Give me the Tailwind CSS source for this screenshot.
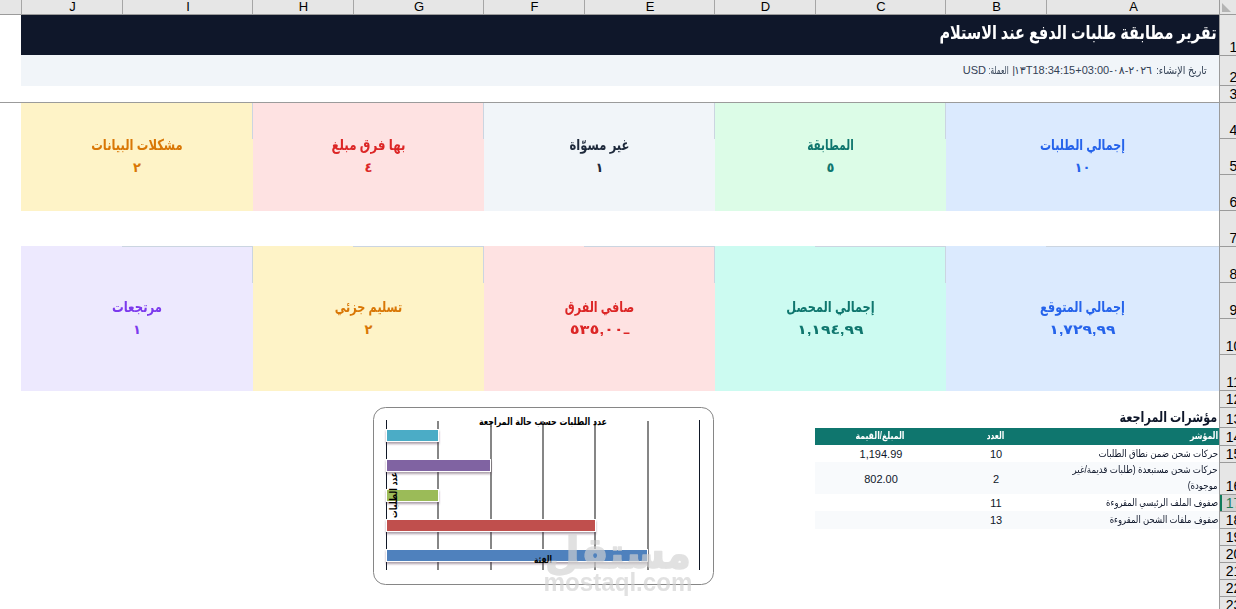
<!DOCTYPE html>
<html lang="ar" dir="rtl">
<head>
    <meta charset="UTF-8">
    <meta name="viewport" content="width=device-width, initial-scale=1.0">
    <title>تقرير مطابقة طلبات الدفع عند الاستلام</title>
    <script src="https://cdn.jsdelivr.net/npm/@tailwindcss/browser@4"></script>
</head>
<body class="relative w-[1236px] h-[609px] overflow-hidden bg-white text-black font-['Liberation_Sans','DejaVu_Sans',sans-serif]">
    <!-- Column letters -->
    <div class="flex h-[15px] bg-[#e6e6e6] border-b border-[#9b9b9b] text-[13px] leading-[13px] text-center *:pl-px">
        <div class="w-[17px] border-l border-[#9b9b9b] pt-[3px] pr-[5px]">
            <svg class="block" width="9" height="9"><path d="M0 0V9H9Z" fill="#b4b4b4"/></svg>
        </div>
        <div class="w-[173px] border-l border-[#a6a6a6]">A</div>
        <div class="w-[101px] border-l border-[#a6a6a6]">B</div>
        <div class="w-[130px] border-l border-[#a6a6a6]">C</div>
        <div class="w-[101px] border-l border-[#a6a6a6]">D</div>
        <div class="w-[130px] border-l border-[#a6a6a6]">E</div>
        <div class="w-[101px] border-l border-[#a6a6a6]">F</div>
        <div class="w-[130px] border-l border-[#a6a6a6]">G</div>
        <div class="w-[101px] border-l border-[#a6a6a6]">H</div>
        <div class="w-[130px] border-l border-[#a6a6a6]">I</div>
        <div class="w-[101px] border-l border-[#a6a6a6]">J</div>
    </div>

    <div class="flex h-[594px]">
        <!-- Row numbers -->
        <div dir="ltr" class="w-[17px] shrink-0 overflow-hidden border-l border-[#9b9b9b] bg-[#e6e6e6] text-[14px] leading-[14px]">
            <div class="w-[27px] text-center *:flex *:items-end *:justify-center *:border-b *:border-[#9b9b9b] *:pb-px">
                <div class="h-[41px]">1</div>
                <div class="h-[30px]">2</div>
                <div class="h-[17px]">3</div>
                <div class="h-[36px]">4</div>
                <div class="h-[36px]">5</div>
                <div class="h-[36px]">6</div>
                <div class="h-[36px]">7</div>
                <div class="h-[36px]">8</div>
                <div class="h-[36px]">9</div>
                <div class="h-[36px]">10</div>
                <div class="h-[36px]">11</div>
                <div class="h-[17px]">12</div>
                <div class="h-[20px]">13</div>
                <div class="h-[18px]">14</div>
                <div class="h-[17px]">15</div>
                <div class="h-[32px]">16</div>
                <div class="h-[17px] bg-[#d2d2d2] text-[#217a5b] shadow-[inset_2px_0_0_#107c5c]">17</div>
                <div class="h-[17px]">18</div>
                <div class="h-[17px]">19</div>
                <div class="h-[17px]">20</div>
                <div class="h-[17px]">21</div>
                <div class="h-[17px]">22</div>
                <div class="h-[17px]">23</div>
            </div>
        </div>

        <!-- Sheet -->
        <div class="w-[1219px] shrink-0">
            <div class="border-b border-[#9b9b9b] h-[88px]">
                <h1 class="w-[1198px] h-[40px] bg-[#0f172a] text-white font-bold text-[19px] leading-[36px] pr-[2px]"><span class="inline-block origin-right scale-x-[.76]">تقرير مطابقة طلبات الدفع عند الاستلام</span></h1>
                <div class="flex w-[1198px] h-[31px] bg-[#f1f5f9] text-[#334155] text-[11px] leading-[30px] pr-[12px] whitespace-nowrap">
                    <span class="w-[55px]"><span class="inline-block origin-right scale-x-[.86]">تاريخ الإنشاء:</span></span>
                    <span class="w-[137px]">٢٠٢٦-٠٨-١٣T18:34:15+03:00</span>
                    <span class="w-[6px]">|</span>
                    <span class="w-[23px]"><span class="inline-block origin-right scale-x-[.66]">العملة:</span></span>
                    <span>USD</span>
                </div>
            </div>

            <!-- Order counts -->
            <div class="flex h-[108px] font-bold text-[15px] leading-[23px] text-center *:pt-[30px]">
                <div class="w-[273px] bg-[#dbeafe] text-[#2563eb]"><p class="scale-x-[.74]">إجمالي الطلبات</p><p class="text-[13px]">١٠</p></div>
                <div class="relative w-[231px] bg-[#dcfce7] text-[#0f766e]"><i class="absolute top-0 right-0 w-px h-[36px] bg-[#cbd5e1]"></i><p class="scale-x-[.7]">المطابقة</p><p class="text-[13px]">٥</p></div>
                <div class="relative w-[231px] bg-[#f1f5f9] text-[#1e293b]"><i class="absolute top-0 right-0 w-px h-[36px] bg-[#cbd5e1]"></i><p class="scale-x-[.77]">غير مسوّاة</p><p class="text-[13px]">١</p></div>
                <div class="relative w-[231px] bg-[#fee2e2] text-[#dc2626]"><i class="absolute top-0 right-0 w-px h-[36px] bg-[#cbd5e1]"></i><p class="scale-x-[.79]">بها فرق مبلغ</p><p class="text-[13px]">٤</p></div>
                <div class="relative w-[232px] bg-[#fef3c7] text-[#d97706]"><i class="absolute top-0 right-0 w-px h-[36px] bg-[#cbd5e1]"></i><p class="scale-x-[.77]">مشكلات البيانات</p><p class="text-[13px]">٢</p></div>
            </div>

            <!-- Amounts -->
            <div class="flex mt-[35px] h-[145px] font-bold text-[15px] leading-[23px] text-center *:pt-[49px]">
                <div class="relative w-[273px] bg-[#dbeafe] text-[#2563eb]"><i class="absolute top-0 right-0 w-[173px] h-px bg-[#cbd5e1]"></i><p class="scale-x-[.75]">إجمالي المتوقع</p><p class="text-[13px] scale-x-[1.21]">١,٧٢٩,٩٩</p></div>
                <div class="relative w-[231px] bg-[#ccfbf1] text-[#0f766e]"><i class="absolute top-0 right-0 w-[131px] h-[37px] border-t border-r border-[#cbd5e1]"></i><p class="scale-x-[.76]">إجمالي المحصل</p><p class="text-[13px] scale-x-[1.21]">١,١٩٤,٩٩</p></div>
                <div class="relative w-[231px] bg-[#fee2e2] text-[#dc2626]"><i class="absolute top-0 right-0 w-[131px] h-[37px] border-t border-r border-[#cbd5e1]"></i><p class="scale-x-[.74]">صافي الفرق</p><p class="text-[13px] scale-x-[1.25]">ـ٥٣٥,٠٠</p></div>
                <div class="relative w-[231px] bg-[#fef3c7] text-[#d97706]"><i class="absolute top-0 right-0 w-[131px] h-[37px] border-t border-r border-[#cbd5e1]"></i><p class="scale-x-[.75]">تسليم جزئي</p><p class="text-[13px]">٢</p></div>
                <div class="relative w-[232px] bg-[#ede9fe] text-[#7c3aed]"><i class="absolute top-0 right-0 w-[131px] h-[37px] border-t border-r border-[#cbd5e1]"></i><p class="scale-x-[.78]">مرتجعات</p><p class="text-[13px]">١</p></div>
            </div>

            <div class="flex pt-[16px]">
                <!-- Audit indicators -->
                <div class="w-[404px] text-[11px] text-[#0f172a]">
                    <h2 class="h-[21px] pr-[2px] font-bold text-[14px] leading-[21px]"><span class="inline-block origin-right scale-x-[.8]">مؤشرات المراجعة</span></h2>
                    <div class="flex h-[17px] items-center bg-[#0f766e] text-white font-bold text-[10px] leading-[15px] pb-[2px]">
                        <div class="w-[173px] pr-px"><span class="inline-block origin-right scale-x-[.78]">المؤشر</span></div><div class="w-[101px] text-center scale-x-[.74]">العدد</div><div class="w-[130px] text-center scale-x-[.78]">المبلغ/القيمة</div>
                    </div>
                    <div class="flex h-[17px] items-center">
                        <div class="w-[173px] pr-px text-[10px]"><span class="inline-block origin-right scale-x-[.86]">حركات شحن ضمن نطاق الطلبات</span></div><div class="w-[100px] pt-px text-center">10</div><div class="w-[130px] pt-px text-center">1,194.99</div>
                    </div>
                    <div class="flex h-[32px] items-center bg-[#f8fafc]">
                        <div class="w-[173px] pr-px text-[10px] leading-[16px] whitespace-nowrap"><span class="inline-block origin-right scale-x-[.86]">حركات شحن مستبعدة (طلبات قديمة/غير<br>موجودة)</span></div><div class="w-[100px] pt-[3px] text-center">2</div><div class="w-[130px] pt-[3px] text-center">802.00</div>
                    </div>
                    <div class="flex h-[17px] items-center">
                        <div class="w-[173px] pr-px text-[10px]"><span class="inline-block origin-right scale-x-[.835]">صفوف الملف الرئيسي المقروءة</span></div><div class="w-[100px] pt-px text-center">11</div>
                    </div>
                    <div class="flex h-[18px] items-center bg-[#f8fafc]">
                        <div class="w-[173px] pr-px pb-[2px] text-[10px]"><span class="inline-block origin-right scale-x-[.84]">صفوف ملفات الشحن المقروءة</span></div><div class="w-[100px] text-center">13</div>
                    </div>
                </div>

                <!-- Chart -->
                <svg dir="ltr" class="block mr-[100px] h-[202px] w-[342px] overflow-visible" viewBox="373 407 342 202" font-family="DejaVu Sans, sans-serif">
                    <defs>
                        <filter id="shadow" x="-5%" y="-20%" width="110%" height="180%"><feDropShadow dx="0" dy="2" stdDeviation="1.2" flood-color="#4b2a45" flood-opacity=".45"/></filter>
                    </defs>
                    <rect x="373.5" y="407.5" width="340" height="177" rx="12" fill="#fff" stroke="#868686"/>
                    <path d="M438 421V570M491 421V570M543 421V570M595 421V570M648 421V570" stroke="#868686" stroke-width="2"/>
                    <path d="M386.5 420V570M699.5 420V570" stroke="#111827"/>
                    <g stroke="#fff" filter="url(#shadow)">
                        <rect x="386.5" y="429.5" width="52" height="12" fill="#4bacc6"/>
                        <rect x="386.5" y="459.5" width="104" height="12" fill="#8064a2"/>
                        <rect x="386.5" y="489.5" width="52" height="12" fill="#9bbb59"/>
                        <rect x="386.5" y="519.5" width="209" height="12" fill="#c0504d"/>
                        <rect x="386.5" y="549.5" width="261" height="12" fill="#4f81bd"/>
                    </g>
                    <g font-weight="bold" font-size="10" text-anchor="middle">
                        <text x="543" y="425" textLength="128" lengthAdjust="spacingAndGlyphs">عدد الطلبات حسب حالة المراجعة</text>
                        <text transform="translate(397 495) rotate(-90)" textLength="46" lengthAdjust="spacingAndGlyphs">عدد الطلبات</text>
                        <text x="543" y="563" textLength="18" lengthAdjust="spacingAndGlyphs">الفئة</text>
                    </g>
                    <!-- Watermark -->
                    <g fill="#d2d2d2" opacity=".65" font-weight="bold" text-anchor="middle">
                        <text x="618" y="568" font-size="43" stroke="#d2d2d2" stroke-width="1.5" stroke-linejoin="round" textLength="146" lengthAdjust="spacingAndGlyphs">مستقل</text>
                        <text x="618" y="591" font-size="25" font-family="Liberation Sans, sans-serif" textLength="149" lengthAdjust="spacingAndGlyphs">mostaql.com</text>
                    </g>
                </svg>
            </div>
        </div>
    </div>
</body>
</html>
